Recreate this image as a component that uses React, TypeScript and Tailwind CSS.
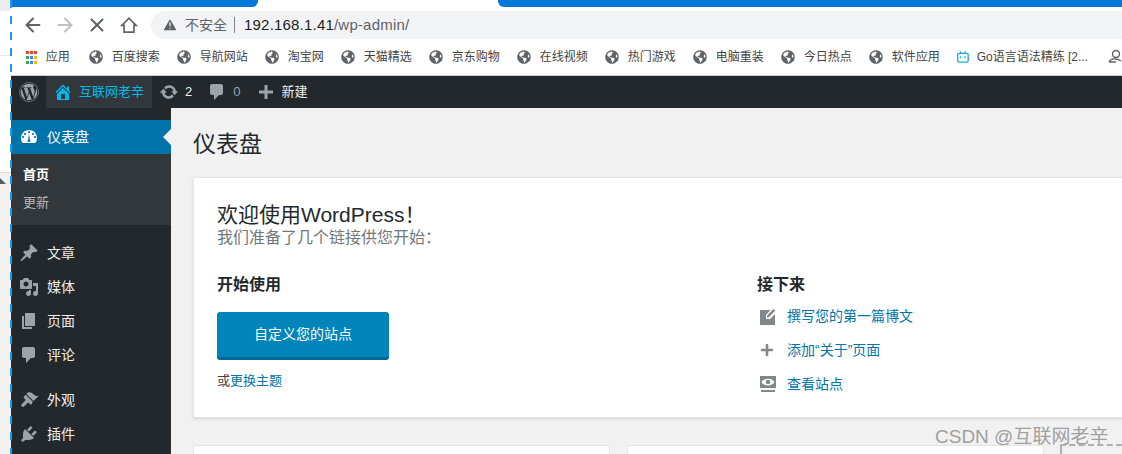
import React from "react";
import { FaWordpress, FaPlus, FaGlobeAmericas } from "react-icons/fa";
import { ArrowLeft, ArrowRight, X, TriangleAlert } from "lucide-react";

const bookmarks = ["百度搜索", "导航网站", "淘宝网", "天猫精选", "京东购物", "在线视频", "热门游戏", "电脑重装", "今日热点", "软件应用"];
const font = "font-['Liberation_Sans','Noto_Sans_CJK_SC',sans-serif]";

function AppsGrid() {
  const c = ["#ea4335", "#ea4335", "#ea4335", "#34a853", "#4285f4", "#fbbc05", "#34a853", "#4285f4", "#fbbc05"];
  return (
    <div className="grid grid-cols-3 gap-[2px] w-[13px] mr-[10px]">
      {c.map((x, i) => (
        <div key={i} className="w-[3px] h-[3px]" style={{ background: x }} />
      ))}
    </div>
  );
}

function Bili() {
  return (
    <svg width="16" height="16" viewBox="0 0 16 16" className="mr-[8px]">
      <path d="M4 0.5 L6 3 M12 0.5 L10 3" stroke="#1ba8dc" strokeWidth="1.4" />
      <rect x="0.9" y="3" width="14.2" height="12" rx="2" fill="none" stroke="#1ba8dc" strokeWidth="1.8" />
      <rect x="4.2" y="7" width="1.8" height="2.6" fill="#1ba8dc" />
      <rect x="10" y="7" width="1.8" height="2.6" fill="#1ba8dc" />
    </svg>
  );
}

function Dash({ d, size = 20, color = "#9ea3a8", className = "" }: { d: string; size?: number; color?: string; className?: string }) {
  return (
    <svg width={size} height={size} viewBox="0 0 20 20" fill={color} fillRule="evenodd" className={`shrink-0 ${className}`}>
      <path d={d} />
    </svg>
  );
}

const P = {
  home: "M16 8.5l1.53 1.53-1.06 1.06L10 4.62l-6.47 6.47-1.06-1.06L10 2.5l4 4v-2h2v4zm-6-2.46l6 5.99V18H4v-5.97zM12 17v-5H8v5h4z",
  update: "M10.2 3.28c3.53 0 6.43 2.61 6.9 6h2.08l-3.5 4-3.5-4h2.32c-.45-1.97-2.21-3.45-4.3-3.45-1.45 0-2.73.71-3.54 1.8L5.27 5.51C6.55 4.08 8.27 3.28 10.2 3.28zm-.4 13.44c-3.52 0-6.43-2.61-6.89-6H.8l3.5-4c1.17 1.33 2.33 2.67 3.5 4H5.48c.45 1.98 2.21 3.45 4.3 3.45 1.45 0 2.73-.71 3.54-1.81l1.4 2.12c-1.28 1.43-3 2.24-4.92 2.24z",
  comment: "M5 2h9c1.1 0 2 .9 2 2v7c0 1.1-.9 2-2 2h-2l-5 5v-5H5c-1.1 0-2-.9-2-2V4c0-1.1.9-2 2-2z",
  plus: "M17 8.5v3h-5.5v5.5h-3v-5.5H3v-3h5.5V3h3v5.5z",
  dashboard: "M3.76 16h12.48A7.96 7.96 0 0 0 18 11c0-4.42-3.58-8-8-8s-8 3.58-8 8c0 1.9.66 3.63 1.76 5zM10 4c.55 0 1 .45 1 1s-.45 1-1 1-1-.45-1-1 .45-1 1-1zM6 6c.55 0 1 .45 1 1s-.45 1-1 1-1-.45-1-1 .45-1 1-1zm8 0c.55 0 1 .45 1 1s-.45 1-1 1-1-.45-1-1 .45-1 1-1zm-5.37 8.72c-.23-.97-.08-1.81.53-1.97L10 6.5l.84 6.25c.61.16.76 1 .53 1.97zM16 9c.55 0 1 .45 1 1s-.45 1-1 1-1-.45-1-1 .45-1 1-1zM4 9c.55 0 1 .45 1 1s-.45 1-1 1-1-.45-1-1 .45-1 1-1z",
  post: "M10.44 3.02l1.82-1.82 6.36 6.35-1.83 1.82c-1.05-.68-2.48-.57-3.41.36l-.75.75c-.92.93-1.04 2.35-.35 3.41l-1.83 1.82-2.41-2.41-2.8 2.79c-.42.42-3.38 2.71-3.8 2.29s1.86-3.39 2.28-3.81l2.79-2.79L4.1 9.36l1.83-1.82c1.05.69 2.48.57 3.4-.36l.75-.75c.93-.92 1.05-2.35.36-3.41z",
  media: "M13 11V4c0-.55-.45-1-1-1h-1.67L9 1H5L3.67 3H2c-.55 0-1 .45-1 1v7c0 .55.45 1 1 1h10c.55 0 1-.45 1-1zM7 4.5c1.38 0 2.5 1.12 2.5 2.5S8.38 9.5 7 9.5 4.5 8.38 4.5 7 5.62 4.5 7 4.5zM14 6h5v10.5c0 1.38-1.12 2.5-2.5 2.5S14 17.88 14 16.5s1.12-2.5 2.5-2.5c.17 0 .34.02.5.05V9h-3V6zm-4 8.05V13h2v3.5c0 1.38-1.12 2.5-2.5 2.5S7 17.88 7 16.5 8.12 14 9.5 14c.17 0 .34.02.5.05z",
  page: "M6 15V2h10v13H6zm-1 1h8v2H3V5h2v11z",
  appearance: "M14.48 11.06L7.41 3.99l1.5-1.5c.5-.56 2.3-.47 3.51.32 1.21.8 1.43 1.28 2.91 2.1 1.18.64 2.45 1.26 4.45.85zm-.71.71L6.7 4.7 4.93 6.47c-.39.39-.39 1.02 0 1.41l1.06 1.06c.59.56.59 1.41 0 1.97l-3.3 3.3c-.55.56-.55 1.41 0 1.97l.31.31c.56.55 1.41.55 1.97 0l3.3-3.3c.56-.59 1.41-.59 1.97 0l1.06 1.06c.39.39 1.02.39 1.41 0z",
  plugin: "M13.11 4.36L9.87 7.6 8 5.73l3.24-3.24c.35-.34 1.05-.2 1.56.32.52.51.66 1.21.31 1.55zm-8 1.77l.91-1.12 9.01 9.01-1.19.84c-.71.71-2.63 1.16-3.82 1.16H6.14L4.9 17.26c-.59.59-1.54.59-2.12 0-.59-.58-.59-1.53 0-2.12l1.24-1.24v-3.88c0-1.13.4-3.05 1.09-3.89zm7.26 3.97l3.24-3.24c.34-.35 1.04-.21 1.55.31.52.51.66 1.21.31 1.55l-3.24 3.25z",
};

function Edit() {
  return (
    <svg width="18" height="18" viewBox="0 0 18 18" fill="#82878c">
      <path d="M1 3h10.5L7 8v4h4l5-5v11H1z" />
      <path d="M8 8.600 14.500 2l1.800 1.800-6.700 6.800H8z" />
    </svg>
  );
}

function View() {
  return (
    <svg width="18" height="18" viewBox="0 0 18 18" fill="#82878c">
      <path d="M1 1h16v12H1z" />
      <path d="M2.500 7c2.500-4.500 10.500-4.500 13 0-2.500 4.500-10.500 4.500-13 0z" fill="#fff" />
      <circle cx="9" cy="7" r="2.300" fill="#82878c" />
      <path d="M2 15h14v2H2z" />
    </svg>
  );
}

function SideItem({ icon, label, active }: { icon: React.ReactNode; label: string; active?: boolean }) {
  return (
    <div className={`h-[34px] flex items-center text-[14px] relative ${active ? "bg-[#0073aa] text-white" : "text-[#eeeeee]"}`}>
      <div className="w-[36px] flex justify-center">{icon}</div>
      <span>{label}</span>
      {active && (
        <div className="absolute right-0 top-[9px] w-0 h-0 border-y-[8px] border-y-transparent border-r-[8px] border-r-[#f1f1f1]" />
      )}
    </div>
  );
}

function NextLink({ icon, label }: { icon: React.ReactNode; label: string }) {
  return (
    <div className="flex items-center h-[34px] text-[14px] text-[#0073aa]">
      <div className="w-[30px] flex pl-[2px]">{icon}</div>
      <span>{label}</span>
    </div>
  );
}

export default function App() {
  return (
    <div className={`w-[1122px] h-[454px] overflow-hidden flex bg-white relative ${font}`}>
      <div className="w-[11px] shrink-0 flex flex-col">
        <div className="h-[11px] bg-[#ececec]" />
        <div className="h-[45px] bg-white border-b border-[#e6e6e6]" />
        <div className="h-[116px] bg-white" />
        <div className="flex-1 bg-[#f1f1f1] border-t border-[#dddddd]">
          <div className="w-0 h-0 border-b-[6px] border-b-[#555d66] border-r-[6px] border-r-transparent mt-[5px]" />
        </div>
      </div>
      <div className="flex-1 min-w-0 flex flex-col">
        <div className="h-[7px] flex shrink-0 bg-white">
          <div className="w-[247px] bg-[#0078d7] rounded-br-[6px]" />
          <div className="w-[240px]" />
          <div className="flex-1 bg-[#0078d7] rounded-bl-[6px]" />
        </div>
        <div className="h-[32px] pt-[4px] flex items-center shrink-0 bg-white pl-[11px]">
          <ArrowLeft size={22} strokeWidth={2.2} className="text-[#5f6368]" />
          <ArrowRight size={22} strokeWidth={2.2} className="text-[#bdc1c6] ml-[10px]" />
          <X size={22} strokeWidth={2.2} className="text-[#5f6368] ml-[10px]" />
          <svg width="18" height="18" viewBox="0 0 20 20" fill="none" stroke="#5f6368" strokeWidth="1.9" className="ml-[12px]">
            <path d="M10 2.500 L18 10.500 H15.500 V18 H4.500 V10.500 H2z" />
          </svg>
          <div className="flex-1 h-[28px] ml-[13px] bg-[#f1f3f4] rounded-l-[14px] flex items-center pl-[11px]">
            <TriangleAlert size={16} fill="#5f6368" stroke="#f1f3f4" className="mr-[7px]" />
            <span className="text-[14px] text-[#5f6368]">不安全</span>
            <span className="w-px h-[16px] bg-[#80868b] ml-[7px] mr-[9px]" />
            <span className="text-[15px] tracking-[0.2px] text-[#202124]">192.168.1.41</span>
            <span className="text-[15px] tracking-[0.2px] text-[#5f6368]">/wp-admin/</span>
          </div>
        </div>
        <div className="h-[37px] flex items-center shrink-0 bg-white pl-[15px] text-[12px] text-[#444] border-b border-[#d0d0d0] whitespace-nowrap overflow-hidden">
          <AppsGrid />
          <span className="mr-[19px]">应用</span>
          {bookmarks.map((b) => (
            <div key={b} className="flex items-center mr-[17px]">
              <FaGlobeAmericas size={14} className="text-[#5f6368] mr-[9px]" />
              <span>{b}</span>
            </div>
          ))}
          <Bili />
          <span>Go语言语法精练 [2...</span>
          <svg width="14" height="16" viewBox="0 0 14 16" fill="none" stroke="#5f6368" strokeWidth="1.4" className="ml-[20px] shrink-0">
            <circle cx="8" cy="5" r="3.500" />
            <path d="M1 13 C3 9 9 9 13 12 M1 13 H8" />
          </svg>
        </div>
        <div className="h-[32px] shrink-0 bg-[#23282d] flex items-center text-[13px] text-[#eeeeee] whitespace-nowrap">
          <div className="w-[35px] flex justify-center">
            <FaWordpress size={20} className="text-[#9ea3a8]" />
          </div>
          <div className="h-full bg-[#32373c] flex items-center pl-[7px] text-[#00b9eb] w-[106px] shrink-0">
            <Dash d={P.home} color="#00b9eb" className="mr-[6px]" />
            <span>互联网老辛</span>
          </div>
          <Dash d={P.update} className="ml-[7px] mr-[6px]" />
          <span>2</span>
          <Dash d={P.comment} className="ml-[15px] mr-[6px]" />
          <span className="text-[#9ea3a8]">0</span>
          <Dash d={P.plus} className="ml-[16px] mr-[5px]" />
          <span>新建</span>
        </div>
        <div className="flex-1 flex min-h-0 bg-[#f1f1f1]">
          <div className="w-[160px] shrink-0 bg-[#23282d] pt-[12px]">
            <SideItem active icon={<Dash d={P.dashboard} color="#ffffff" />} label="仪表盘" />
            <div className="h-[71px] bg-[#32373c] text-[13px] pt-[7px] pl-[12px] flex flex-col">
              <div className="h-[28px] flex items-center font-bold text-white">首页</div>
              <div className="h-[28px] flex items-center text-[#b4b9be]">更新</div>
            </div>
            <div className="h-[11px]" />
            <SideItem icon={<Dash d={P.post} />} label="文章" />
            <SideItem icon={<Dash d={P.media} />} label="媒体" />
            <SideItem icon={<Dash d={P.page} />} label="页面" />
            <SideItem icon={<Dash d={P.comment} />} label="评论" />
            <div className="h-[11px]" />
            <SideItem icon={<Dash d={P.appearance} />} label="外观" />
            <SideItem icon={<Dash d={P.plugin} />} label="插件" />
          </div>
          <div className="flex-1 min-w-0 pl-[22px] overflow-hidden">
            <h1 className="text-[23px] leading-[30px] text-[#23282d] mt-[21px] mb-[18px]">仪表盘</h1>
            <div className="bg-white border border-[#e5e5e5] shadow-sm h-[241px] w-[960px] pl-[23px] pt-[23px]">
              <div className="text-[21px] leading-[27px] text-[#23282d]">欢迎使用WordPress<span className="tracking-[-8px]">！</span></div>
              <div className="text-[16px] leading-[20px] text-[#72777c]">我们准备了几个链接供您开始：</div>
              <div className="flex mt-[26px]">
                <div className="w-[540px]">
                  <div className="text-[16px] leading-[22px] font-bold text-[#23282d]">开始使用</div>
                  <div className="mt-[16px] w-[172px] h-[48px] bg-[#0085ba] rounded-[3px] border-b-[3px] border-[#006799] text-white text-[14px] flex items-center justify-center">自定义您的站点</div>
                  <div className="text-[13px] mt-[11px] text-[#444]">或<span className="text-[#0073aa]">更换主题</span></div>
                </div>
                <div>
                  <div className="text-[16px] leading-[22px] font-bold text-[#23282d]">接下来</div>
                  <div className="mt-[3px]">
                    <NextLink icon={<Edit />} label="撰写您的第一篇博文" />
                    <NextLink icon={<FaPlus size={14} className="text-[#82878c] ml-[1px]" />} label="添加“关于”页面" />
                    <NextLink icon={<View />} label="查看站点" />
                  </div>
                </div>
              </div>
            </div>
            <div className="flex gap-[17px] mt-[27px]">
              <div className="w-[417px] h-[40px] bg-white border border-[#e5e5e5]" />
              <div className="w-[417px] h-[40px] bg-white border border-[#e5e5e5]" />
            </div>
          </div>
        </div>
      </div>
      <div className="absolute left-[10px] top-0 w-[2px] h-full bg-[repeating-linear-gradient(180deg,#1e9be8_0,#1e9be8_8px,transparent_8px,transparent_16px)]" />
      <div className="absolute left-[1060px] top-[444px] w-[62px] h-[10px] border-t-2 border-l-2 border-dashed border-[#b0b0b0]" />
      <div className="absolute left-[935px] top-[423px] text-[19px] text-[#a0a0a0] whitespace-nowrap">CSDN @互联网老辛</div>
    </div>
  );
}
